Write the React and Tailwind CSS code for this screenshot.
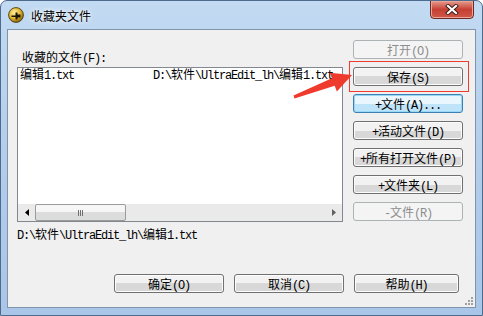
const CJK = /([\u3000-\u9fff\uff00-\uffef]+)/;

// SimSun-ish: full-width glyphs 12px, half-width glyphs 6px
function T({ children }) {
  const parts = String(children).split(CJK).filter(Boolean);
  return (
    <span className="whitespace-pre">
      {parts.map((p, i) =>
        CJK.test(p) ? (
          <span key={i} className="font-['Noto_Sans_CJK_SC',sans-serif] text-[12px]">{p}</span>
        ) : (
          <span key={i} className="font-['Liberation_Mono',monospace] text-[12px] tracking-[-1.2px]">{p}</span>
        )
      )}
    </span>
  );
}

function Btn({ children, disabled, focused, w = 'w-[110px]' }) {
  const base = 'flex h-[19px] items-center justify-center rounded-[3px] border leading-none';
  if (disabled)
    return <div className={`${base} ${w} border-[#adb2b5] bg-[#f4f4f4] text-[#8d8d8d]`}><T>{children}</T></div>;
  if (focused)
    return (
      <div className={`${base} ${w} border-[#3c7fb1] bg-gradient-to-b from-[#eaf6fd] from-50% to-[#bfe4f9] to-50% text-black shadow-[inset_0_0_0_1px_#97d9f8]`}>
        <T>{children}</T>
      </div>
    );
  return (
    <div className={`${base} ${w} border-[#707070] bg-gradient-to-b from-[#f2f2f2] from-50% to-[#d8d8d8] to-50% text-black shadow-[inset_0_0_0_1px_#fcfcfc]`}>
      <T>{children}</T>
    </div>
  );
}

export default function App() {
  return (
    <div className="relative flex h-[316px] w-[483px] flex-col overflow-hidden rounded-t-[7px] border border-[#4e6a8c] bg-gradient-to-b from-[#c2daf2] via-[#b3cdea] to-[#a9c6e8]">
      {/* title bar */}
      <div className="flex h-[28px] shrink-0 items-start">
        <svg width="16" height="16" viewBox="0 0 16 16" className="ml-[7px] mt-[6px]">
          <defs>
            <radialGradient id="g" cx="40%" cy="35%" r="65%">
              <stop offset="0" stopColor="#fff2a8" />
              <stop offset="0.6" stopColor="#e2b52c" />
              <stop offset="1" stopColor="#8a6410" />
            </radialGradient>
          </defs>
          <circle cx="8" cy="8" r="7.4" fill="url(#g)" stroke="#4a3a10" strokeWidth="0.9" />
          <path d="M3.5 8.5h4v-3h2v2h3v3h-3v2h-2v-2.5h-4z" fill="#1a1406" />
        </svg>
        <span className="ml-[7px] mt-[7px] font-['Noto_Sans_CJK_SC',sans-serif] text-[12px] leading-[16px] text-black [text-shadow:0_0_6px_#ffffff,0_0_3px_#ffffff]">
          收藏夹文件
        </span>
        <div className="ml-auto mr-[8px] -mt-px flex h-[19px] w-[44px] items-center justify-center rounded-b-[4px] border border-[#6e2a24] bg-gradient-to-b from-[#e49a8e] from-0% via-[#c53f33] via-50% to-[#d0584a] shadow-[inset_0_0_0_1px_#eaa596]">
          <svg width="14" height="11" viewBox="0 0 14 11">
            <path d="M3 2l8 7M11 2l-8 7" stroke="#3b1b16" strokeWidth="4" strokeLinecap="square" />
            <path d="M3 2l8 7M11 2l-8 7" stroke="#ffffff" strokeWidth="2.2" strokeLinecap="square" />
          </svg>
        </div>
      </div>

      {/* client area */}
      <div className="relative mx-[6px] flex h-[279px] shrink-0 flex-col border border-[#7f93ab] bg-[#f0f0f0] text-black">
        <div className="flex">
          <div className="ml-[9px] flex w-[326px] flex-col">
            <div className="mt-[19px] h-[14px] pl-[5px] leading-[14px]"><T>收藏的文件(F):</T></div>
            <div className="mt-[4px] flex h-[155px] flex-col border border-[#828790] bg-white">
              <div className="flex h-[13px] items-center leading-[13px]">
                <div className="w-[135px] pl-[2px]"><T>编辑1.txt</T></div>
                <div><T>{'D:\\软件\\UltraEdit_lh\\编辑1.txt'}</T></div>
              </div>
              <div className="mt-auto flex h-[17px] bg-[#eaeaea]">
                <div className="flex w-[17px] items-center justify-center">
                  <svg width="4" height="7" viewBox="0 0 4 7"><path d="M4 0v7L0 3.5z" fill="#000" /></svg>
                </div>
                <div className="flex h-[17px] w-[91px] items-center justify-center gap-[1px] rounded-[2px] border border-[#9b9b9b] bg-gradient-to-b from-[#f6f6f6] from-50% to-[#dcdcdc] to-50%">
                  <span className="h-[6px] w-[1px] bg-[#707070]" />
                  <span className="h-[6px] w-[1px] bg-[#707070]" />
                  <span className="h-[6px] w-[1px] bg-[#707070]" />
                </div>
                <div className="flex-1" />
                <div className="flex w-[17px] items-center justify-center">
                  <svg width="4" height="7" viewBox="0 0 4 7"><path d="M0 0v7l4-3.5z" fill="#606060" /></svg>
                </div>
              </div>
            </div>
            <div className="mt-[5px] h-[13px] leading-[13px]"><T>{'D:\\软件\\UltraEdit_lh\\编辑1.txt'}</T></div>
          </div>

          <div className="ml-[10px] mt-[10px] flex flex-col gap-[8px]">
            <Btn disabled>打开(O)</Btn>
            <Btn>保存(S)</Btn>
            <Btn focused>+文件(A)...</Btn>
            <Btn>+活动文件(D)</Btn>
            <Btn>+所有打开文件(P)</Btn>
            <Btn>+文件夹(L)</Btn>
            <Btn disabled>-文件(R)</Btn>
          </div>
        </div>

        <div className="mb-[14px] mt-auto flex gap-[10px] pl-[106px]">
          <Btn>确定(O)</Btn>
          <Btn>取消(C)</Btn>
          <Btn w="w-[105px]">帮助(H)</Btn>
        </div>

        {/* size grip */}
        <svg width="8" height="8" viewBox="0 0 8 8" className="absolute bottom-[2px] right-[2px]">
          {[[6, 0], [6, 3], [3, 3], [6, 6], [3, 6], [0, 6]].map(([x, y], i) => (
            <rect key={i} x={x} y={y} width="2" height="2" fill="#a0a0a0" />
          ))}
        </svg>
      </div>

      {/* annotation overlay */}
      <div className="pointer-events-none absolute left-[348px] top-[60px] h-[31px] w-[120px] border border-[#f03a2e]" />
      <svg width="483" height="316" className="pointer-events-none absolute left-[-1px] top-[-1px]">
        <polygon
          points="293.47,95.6 331.88,78.36 329.75,72.75 352,75 336.85,91.45 334.72,85.84 294.53,98.4"
          fill="#ef3b2d"
        />
      </svg>
    </div>
  );
}
